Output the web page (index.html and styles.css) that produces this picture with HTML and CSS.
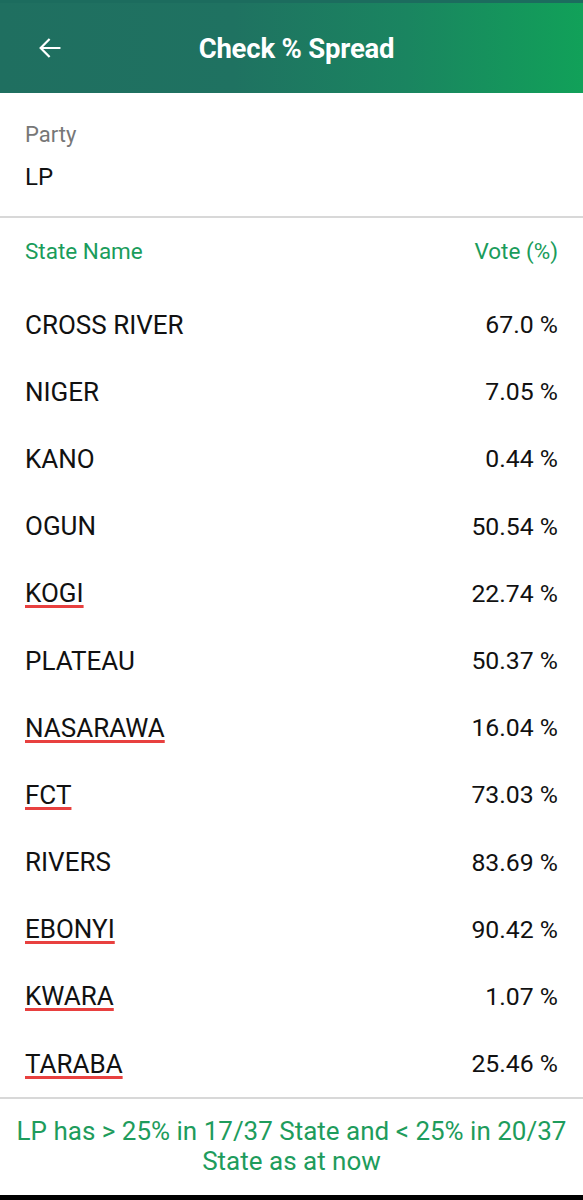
FILE: index.html
```html
<!DOCTYPE html>
<html>
<head>
  <meta name='viewport' content='width=device-width, initial-scale=1'>
  <meta charset='UTF-8'>
  <title>Check % Spread</title>
  <link rel="stylesheet" href="styles.css">
</head>
<body>
  <div class='app'>
    <div class='bar'>
      <span class='back'>
        <svg width='28' height='28' viewBox='0 0 24 24'><path d='M20 12H4.5M11 5l-7 7 7 7' fill='none' stroke='#fff' stroke-width='1.9' stroke-linecap='square'/></svg>
      </span>
      <h1 class='ttl'>Check % Spread</h1>
    </div>

    <div class='party'>
      <div class='pl'>Party</div>
      <div class='pv'>LP</div>
    </div>

    <div class='hd'><span>State Name</span><span>Vote (%)</span></div>

    <div class='list' id='list'>
      <div class='r'><span class='n'>CROSS RIVER</span><span class='v'>67.0 %</span></div>
      <div class='r'><span class='n'>NIGER</span><span class='v'>7.05 %</span></div>
      <div class='r'><span class='n'>KANO</span><span class='v'>0.44 %</span></div>
      <div class='r'><span class='n'>OGUN</span><span class='v'>50.54 %</span></div>
      <div class='r'><span class='n sp'>KOGI</span><span class='v'>22.74 %</span></div>
      <div class='r'><span class='n'>PLATEAU</span><span class='v'>50.37 %</span></div>
      <div class='r'><span class='n sp'>NASARAWA</span><span class='v'>16.04 %</span></div>
      <div class='r'><span class='n sp'>FCT</span><span class='v'>73.03 %</span></div>
      <div class='r'><span class='n'>RIVERS</span><span class='v'>83.69 %</span></div>
      <div class='r'><span class='n sp'>EBONYI</span><span class='v'>90.42 %</span></div>
      <div class='r'><span class='n sp'>KWARA</span><span class='v'>1.07 %</span></div>
      <div class='r'><span class='n sp'>TARABA</span><span class='v'>25.46 %</span></div>
    </div>

    <div class='ft'>LP has &gt; 25% in 17/37 State and &lt; 25% in 20/37 State as at now</div>
  </div>
  <div class='nav'></div>
</body>
</html>
```

FILE: styles.css
```css
body{margin:0;background:#fff;color:#111;font-family:Roboto,"Noto Sans",sans-serif;}
.app{height:1195px;overflow:hidden;}
.bar{height:93px;display:flex;align-items:center;background:linear-gradient(90deg,#1f6f60 0%,#1f7261 40%,#1a8560 70%,#11a159 100%);border-top:3px solid #1c6c5e;box-sizing:border-box;}
.back{width:28px;height:28px;margin-left:36px;display:flex;}
.ttl{flex:1;margin:0;padding-right:54px;text-align:center;color:#fff;font-size:27.5px;font-weight:bold;letter-spacing:-0.2px;}
.party{padding:28px 25px 0;height:95px;border-bottom:2px solid #d8d8d8;}
.pl{color:#777;font-size:22px;line-height:28px;}
.pv{color:#111;font-size:24px;line-height:30px;margin-top:13px;}
.hd{display:flex;justify-content:space-between;padding:0 25px;height:73px;line-height:66px;color:#1a9c5b;font-size:22.5px;}
.r{display:flex;justify-content:space-between;align-items:center;height:67.2px;padding:0 25px;}
.n{font-size:26px;}
.v{font-size:24.8px;}
.sp{text-decoration:underline;text-decoration-color:#e8403f;text-decoration-thickness:3px;text-underline-offset:3px;}
.ft{border-top:2px solid #d8d8d8;padding:17px 10px 0;text-align:center;color:#1e9c5c;font-size:26px;line-height:30px;}
.nav{height:5px;background:#000;}
```
